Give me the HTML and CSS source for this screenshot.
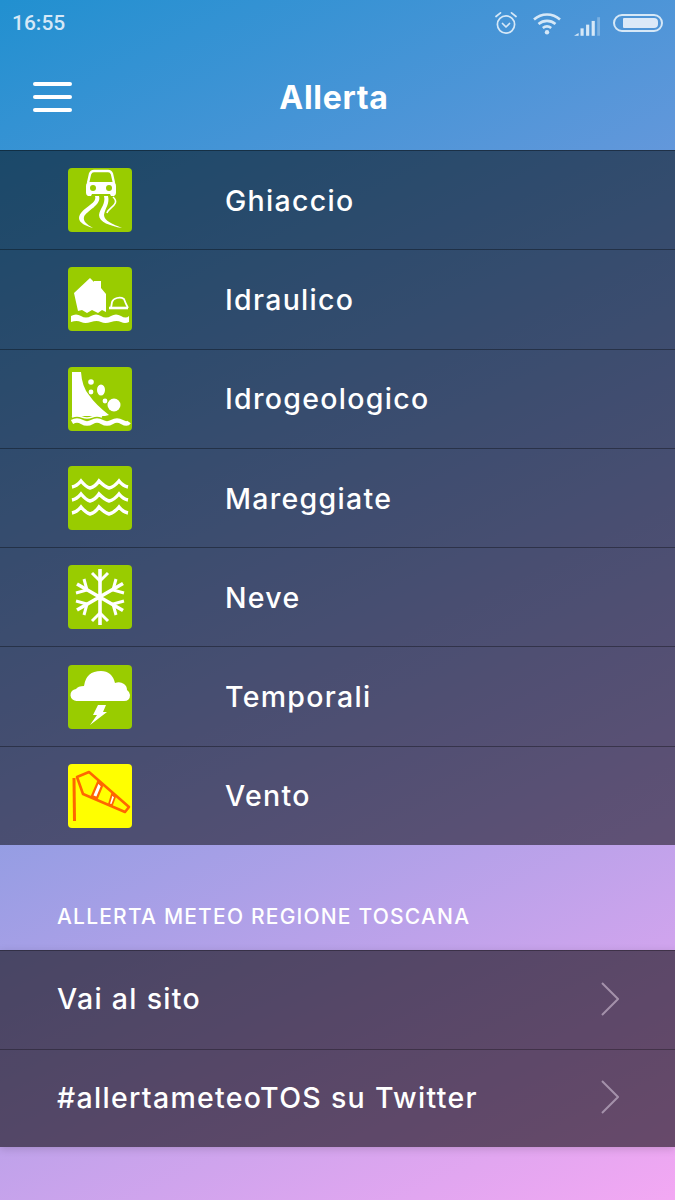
FILE: index.html
```html
<!DOCTYPE html>
<html>
<head>
    <title>Allerta</title>
    <link rel="stylesheet" href="styles.css">
</head>
<body>
    <div class="status-bar">
        <span class="clock">16:55</span>
        <div class="status-icons">
            <svg class="alarm-icon" viewBox="0 0 24 24" fill="none" stroke="#d6e8f7" stroke-width="1.7">
                <circle cx="12" cy="13.5" r="8.6"/>
                <path d="M8.5 12.5l3.5 3.5 3.5-3.5" stroke-linecap="round" stroke-linejoin="round"/>
                <path d="M2 5.5L6.5 1.8M22 5.5L17.5 1.8" stroke-linecap="round"/>
            </svg>
            <svg class="wifi-icon" viewBox="0 0 30 24" fill="none" stroke="#d6e8f7" stroke-width="2.6">
                <path d="M2 8.5C9.5 1.8 20.5 1.8 28 8.5"/>
                <path d="M6.5 13C11.5 8.8 18.5 8.8 23.5 13"/>
                <path d="M10.8 17C13.3 15 16.7 15 19.2 17"/>
                <circle cx="15" cy="21.3" r="2.2" fill="#d6e8f7" stroke="none"/>
            </svg>
            <svg class="signal-icon" viewBox="0 0 28 20" fill="#d6e8f7">
                <path d="M0 20l5-3v3z"/>
                <rect x="7" y="12" width="3.4" height="8"/>
                <rect x="13" y="8" width="3.4" height="12"/>
                <rect x="19" y="4" width="3.4" height="16"/>
                <rect x="25" y="0" width="3" height="20" opacity="0.35"/>
            </svg>
            <div class="battery"><div class="battery-level"></div></div>
        </div>
    </div>

    <header class="app-bar">
        <div class="menu-btn"><span></span><span></span><span></span></div>
        <h1>Allerta</h1>
    </header>

    <ul class="alert-list">
        <li class="alert-row">
            <svg class="alert-icon" viewBox="0 0 64 64">
                <rect width="64" height="64" rx="4" fill="#99cc00"/>
                <path d="M20 15l2-9q1-3 4-3h14q3 0 4 3l2 9" fill="none" stroke="#fff" stroke-width="2.400"/>
                <path d="M18 18q0-4 4-4h22q4 0 4 4v7q0 2-2 3h-3l-1-2H24l-1 2h-3q-2-1-2-3z" fill="#fff"/>
                <circle cx="25" cy="20" r="3" fill="#99cc00"/>
                <circle cx="41" cy="20" r="3" fill="#99cc00"/>
                <path d="M27 28c3 8-15 12-16 22 0 5 7 8 14 10-7-4-10-7-9-11 2-6 18-12 15-21z" fill="#fff"/>
                <path d="M36 28c2 8-4 12-5 19 0 7 11 11 23 13-9-4-18-7-18-13 1-7 6-11 4-19z" fill="#fff"/>
                <path d="M45 29c8 7-5 11-6 16" fill="none" stroke="#fff" stroke-width="1.600"/>
            </svg>
            <span>Ghiaccio</span>
        </li>
        <li class="alert-row">
            <svg class="alert-icon" viewBox="0 0 64 64">
                <rect width="64" height="64" rx="4" fill="#99cc00"/>
                <path d="M6 26L22 11l4 4v-1h7v7l5 6v18l-4-2-4 3-6-3-5 3-5-3-4 1z" fill="#fff"/>
                <path d="M43 41l1-6q1-3 5-4 4-1 7 1l2 5 2 4" fill="none" stroke="#fff" stroke-width="1.800"/>
                <path d="M41 41h19" stroke="#fff" stroke-width="2.600"/>
                <path d="M3 49q5-3 10 0t10 0 10 0 10 0 10 0 8 0v6q-4 2-8 0t-10 0-10 0-10 0-10 0-10 0z" fill="#fff"/>
            </svg>
            <span>Idraulico</span>
        </li>
        <li class="alert-row">
            <svg class="alert-icon" viewBox="0 0 64 64">
                <rect width="64" height="64" rx="4" fill="#99cc00"/>
                <path d="M4 5h9q1 15 8 23 6 9 20 20l-4 1H4z" fill="#fff"/>
                <circle cx="23" cy="15" r="2.800" fill="#fff"/>
                <circle cx="23" cy="25" r="2.400" fill="#fff"/>
                <ellipse cx="33" cy="23" rx="4" ry="5.500" fill="#fff"/>
                <circle cx="37" cy="34" r="2.400" fill="#fff"/>
                <circle cx="46" cy="38" r="6.500" fill="#fff"/>
                <path d="M4 50q5-2 10 0t10 0 10 0" fill="none" stroke="#fff" stroke-width="1.600"/>
                <path d="M4 55q5-3 10 0t10 0 10 0 10 0 10 0 7 0" fill="none" stroke="#fff" stroke-width="4.400"/>
            </svg>
            <span>Idrogeologico</span>
        </li>
        <li class="alert-row">
            <svg class="alert-icon" viewBox="0 0 64 64" fill="none" stroke="#fff" stroke-width="3.400">
                <rect width="64" height="64" rx="4" fill="#99cc00" stroke="none"/>
                <path d="M4 21Q9 20 13 15Q18 21 22 22Q27 21 31 15Q37 21 41 22Q46 21 51 15Q55 20 60 21"/>
                <path d="M4 34Q9 33 13 28Q18 34 22 35Q27 34 31 28Q37 34 41 35Q46 34 51 28Q55 33 60 34"/>
                <path d="M4 47Q9 46 13 41Q18 47 22 48Q27 47 31 41Q37 47 41 48Q46 47 51 41Q55 46 60 47"/>
            </svg>
            <span>Mareggiate</span>
        </li>
        <li class="alert-row">
            <svg class="alert-icon" viewBox="0 0 64 64" fill="none" stroke="#fff" stroke-width="3">
                <rect width="64" height="64" rx="4" fill="#99cc00" stroke="none"/>
                <path d="M32 4v56M9 19l46 26.500M9 45l46-26.500" stroke-width="3.600"/>
                <path d="M24 8l8 8 8-8M24 56l8-8 8 8"/>
                <path d="M8 28l11-3-3-11M56 36l-11 3 3 11"/>
                <path d="M8 36l11 3-3 11M56 28l-11-3 3-11"/>
            </svg>
            <span>Neve</span>
        </li>
        <li class="alert-row">
            <svg class="alert-icon" viewBox="0 0 64 64">
                <rect width="64" height="64" rx="4" fill="#99cc00"/>
                <path d="M9 36a6 6 0 0 1-1-12q2-3 8-3 2-15 17-15 11 0 14 12 5-2 9 1 3 2 3 6 3 2 3 5 0 6-6 6z" fill="#fff"/>
                <path d="M30 40h8l-3 7h4L22 60l7-10h-4z" fill="#fff"/>
            </svg>
            <span>Temporali</span>
        </li>
        <li class="alert-row">
            <svg class="alert-icon" viewBox="0 0 64 64" fill="none" stroke="#ff6600" stroke-width="2.600">
                <rect width="64" height="64" rx="4" fill="#ffff00" stroke="none"/>
                <path d="M6 14l.5 43" stroke-width="3"/>
                <path d="M9 13l12-5 40 35-4 5-42-18z" stroke-linejoin="round"/>
                <path d="M30 18l4 4-5 12-5-2z" fill="#fff" stroke-width="2.200"/>
                <path d="M44 30l3 3-3 8-3-1z" fill="#fff" stroke-width="1.800"/>
            </svg>
            <span>Vento</span>
        </li>
    </ul>

    <h2 class="section-title">ALLERTA METEO REGIONE TOSCANA</h2>

    <ul class="link-list">
        <li class="link-row">
            <span>Vai al sito</span>
            <svg class="chevron" viewBox="0 0 18 34" fill="none" stroke="#a491aa" stroke-width="2"><path d="M1 1l16 16L1 33"/></svg>
        </li>
        <li class="link-row">
            <span>#allertameteoTOS su Twitter</span>
            <svg class="chevron" viewBox="0 0 18 34" fill="none" stroke="#a491aa" stroke-width="2"><path d="M1 1l16 16L1 33"/></svg>
        </li>
    </ul>
</body>
</html>
```

FILE: styles.css
```css
html, body {
    height: 1200px;
}

body {
    margin: 0;
    overflow: hidden;
    background: linear-gradient(154deg, #2190d0 0%, #f3a8f3 100%);
    color: #fff;
    font-family: Inter, "Open Sans", sans-serif;
}

ul {
    margin: 0;
    padding: 0;
    list-style: none;
}

.status-bar {
    height: 46px;
    padding: 0 12px;
    display: flex;
    justify-content: space-between;
    align-items: center;
}

.clock {
    font-family: Roboto, sans-serif;
    font-size: 21px;
    font-weight: 500;
    color: #d6e8f7;
}

.status-icons {
    display: flex;
    align-items: center;
}

.alarm-icon {
    width: 24px;
    height: 24px;
    margin-right: 14px;
}

.wifi-icon {
    width: 30px;
    height: 24px;
    margin-right: 12px;
}

.signal-icon {
    width: 26px;
    height: 19px;
    margin-top: 6px;
    margin-right: 13px;
}

.battery {
    width: 50px;
    height: 18px;
    box-sizing: border-box;
    border: 2px solid #d6e8f7;
    border-radius: 9px;
    padding: 2px 3px 2px 8px;
}

.battery-level {
    height: 100%;
    background: #dce9f8;
    border-radius: 1px 4px 4px 1px;
}

.app-bar {
    height: 104px;
    position: relative;
    display: flex;
    align-items: center;
    justify-content: center;
}

.app-bar h1 {
    margin: 0 7px 2px 0;
    font-size: 32px;
    font-weight: 700;
    letter-spacing: 0.7px;
}

.menu-btn {
    position: absolute;
    left: 33px;
    top: 36px;
    width: 39px;
    display: flex;
    flex-direction: column;
    gap: 9px;
}

.menu-btn span {
    height: 4px;
    background: #fff;
    border-radius: 2px;
}

.alert-list {
    background: rgba(0, 0, 0, 0.5);
}

.link-list {
    background: rgba(0, 0, 0, 0.56);
    box-shadow: 0 2px 8px rgba(0, 0, 0, 0.15);
}

.alert-row {
    height: 99.3px;
    box-sizing: border-box;
    padding-left: 68px;
    display: flex;
    align-items: center;
    border-top: 1px solid rgba(0, 0, 0, 0.35);
    font-size: 28.5px;
    font-weight: 500;
    letter-spacing: 1.3px;
}

.alert-icon {
    width: 64px;
    height: 64px;
    margin-right: 93px;
    flex-shrink: 0;
}

.section-title {
    height: 105px;
    box-sizing: border-box;
    margin: 0;
    padding: 59px 0 0 57px;
    font-size: 21px;
    font-weight: 500;
    letter-spacing: 1.2px;
}

.link-row {
    height: 98.5px;
    box-sizing: border-box;
    padding: 0 56px 2px 57px;
    display: flex;
    align-items: center;
    justify-content: space-between;
    border-top: 1px solid rgba(0, 0, 0, 0.3);
    font-size: 28.5px;
    font-weight: 500;
    letter-spacing: 1.3px;
}

.chevron {
    width: 18px;
    height: 34px;
}
```
